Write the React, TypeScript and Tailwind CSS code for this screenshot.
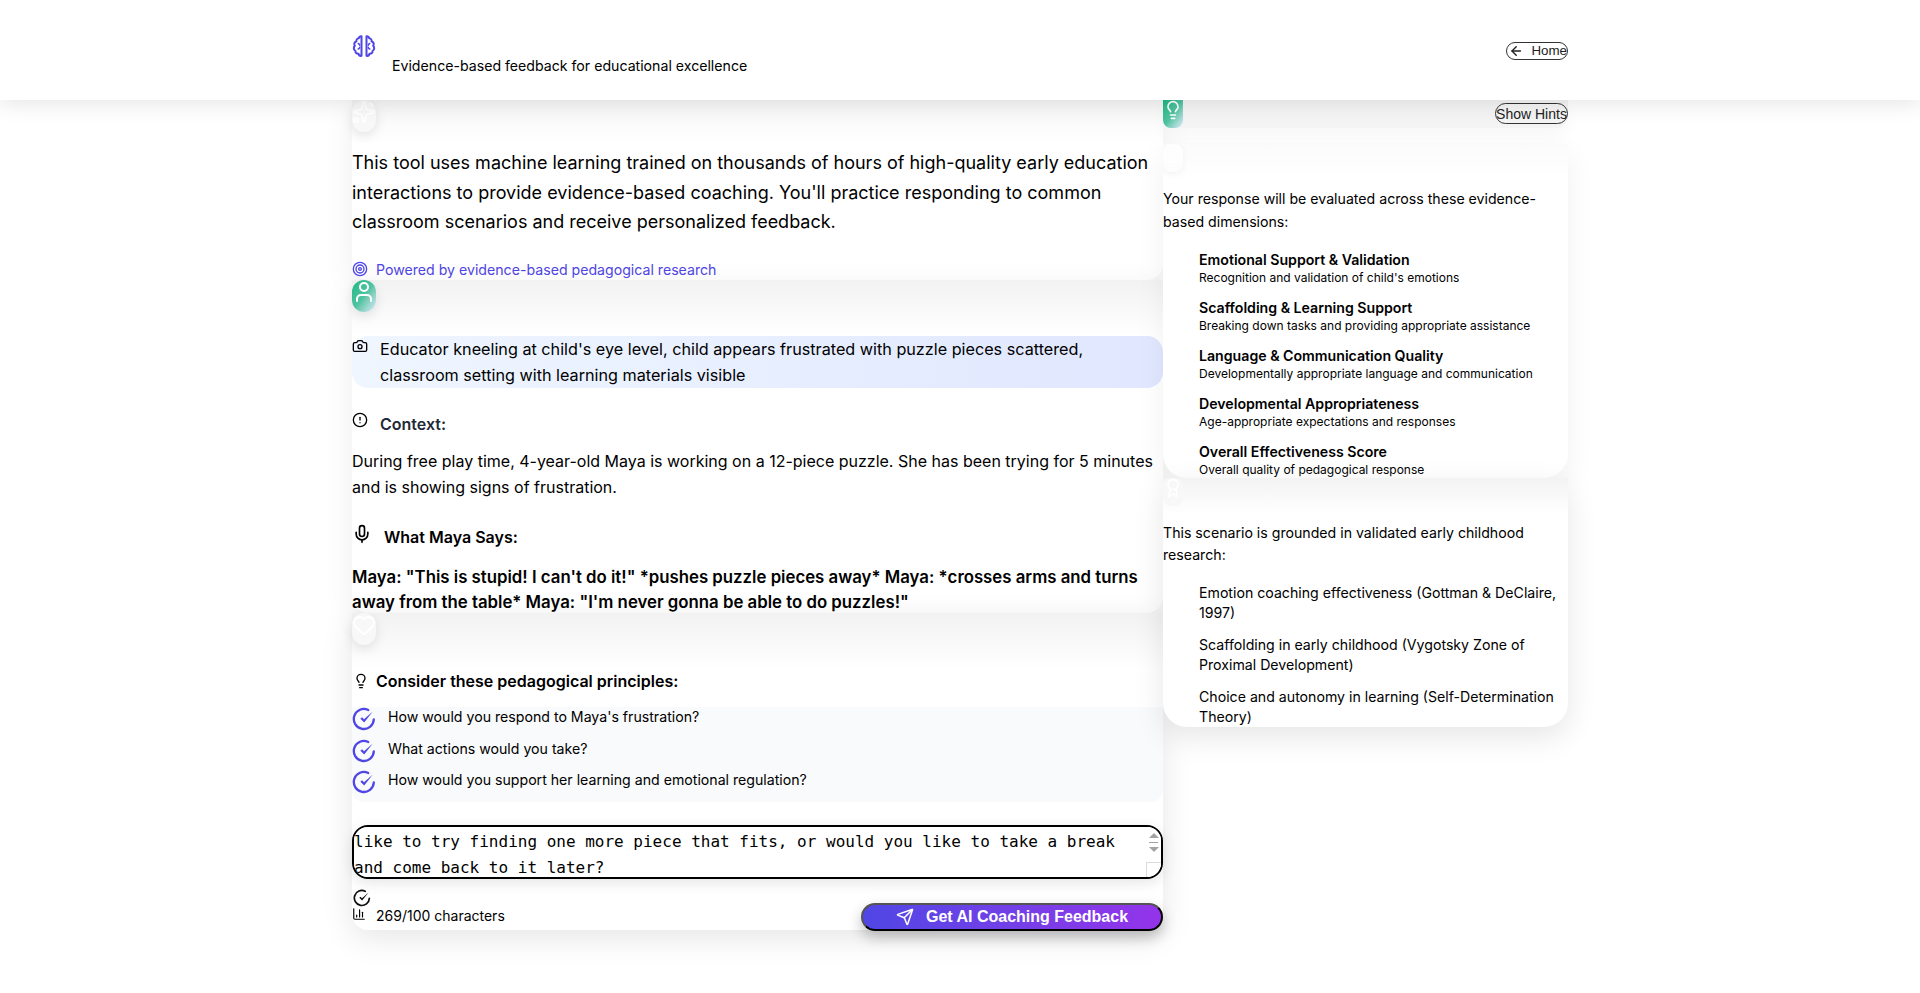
import { useEffect, useRef } from 'react';
import {
  ArrowLeft,
  Award,
  Camera,
  ChartColumn,
  CircleAlert,
  Heart,
  Lightbulb,
  Mic,
  Send,
  Sparkles,
  Target,
  User,
} from 'lucide-react';

const RESPONSE =
  "I can see that you're feeling really frustrated with this puzzle, Maya. Puzzles can be quite tricky and you have been working so hard on this one. Maybe you would like to try finding one more piece that fits, or would you like to take a break and come back to it later?";

const DIMENSIONS = [
  ['Emotional Support & Validation', "Recognition and validation of child's emotions"],
  ['Scaffolding & Learning Support', 'Breaking down tasks and providing appropriate assistance'],
  ['Language & Communication Quality', 'Developmentally appropriate language and communication'],
  ['Developmental Appropriateness', 'Age-appropriate expectations and responses'],
  ['Overall Effectiveness Score', 'Overall quality of pedagogical response'],
];

const RESEARCH = [
  'Emotion coaching effectiveness (Gottman & DeClaire, 1997)',
  'Scaffolding in early childhood (Vygotsky Zone of Proximal Development)',
  'Choice and autonomy in learning (Self-Determination Theory)',
];

const QUESTIONS = [
  "How would you respond to Maya's frustration?",
  'What actions would you take?',
  'How would you support her learning and emotional regulation?',
];

const Badge = ({ green, children }: { green?: boolean; children: React.ReactNode }) => (
  <div
    className={`w-6 h-8 rounded-xl overflow-hidden text-white shadow-[0_4px_12px_rgba(0,0,0,0.1)] ${
      green ? 'bg-gradient-to-br from-[#10b981] via-[#4fc3a1] to-[#dbeafe]' : 'bg-[#f8f8f8]'
    }`}
  >
    {children}
  </div>
);

// brain logo, two lobes around a centre bar
const BrainLogo = () => (
  <svg viewBox="0 0 24 24" fill="none" stroke="currentColor" strokeWidth={2} strokeLinecap="round" strokeLinejoin="round" className="w-6 h-6 text-[#4f46e5]">
    <path d="M9.5 2.2A2.6 2.6 0 0 0 6.8 4.2 2.6 2.6 0 0 0 4.4 7.4a2.7 2.7 0 0 0-1.5 4.4 3 3 0 0 0 .5 5 2.7 2.7 0 0 0 3.1 3 2.6 2.6 0 0 0 3 2z" />
    <path d="M14.5 2.2a2.6 2.6 0 0 1 2.7 2 2.6 2.6 0 0 1 2.4 3.2 2.7 2.7 0 0 1 1.5 4.4 3 3 0 0 1-.5 5 2.7 2.7 0 0 1-3.1 3 2.6 2.6 0 0 1-3 2z" />
    <path d="M6.2 9.5c.9.3 1.4.9 1.5 1.7M6.2 15c.9-.3 1.4-.9 1.5-1.7M17.8 9.5c-.9.3-1.4.9-1.5 1.7M17.8 15c-.9-.3-1.4-.9-1.5-1.7" strokeWidth={1.4} />
  </svg>
);

// open circle with a check that thins out to the right
const CheckRing = ({ className }: { className: string }) => (
  <svg viewBox="0 0 24 24" fill="none" className={className}>
    <path d="M21.8 12.5A10 10 0 1 1 16.2 3" stroke="currentColor" strokeWidth={2.3} strokeLinecap="round" />
    <path d="M8.4 11.8 10 10.3 12 12.2 20.8 4.6 12.2 15.4 z" fill="currentColor" />
  </svg>
);

// the picture's native scrollbar and resize corner
const FakeScrollbar = () => (
  <div className="absolute right-[2px] top-[2px] bottom-[2px] w-[15px] bg-white rounded-r-2xl overflow-hidden">
    <div className="mx-auto mt-[6px] w-0 h-0 border-x-[5px] border-x-transparent border-b-[5px] border-b-[#a3a3a3]" />
    <div className="mx-auto mt-[4px] w-[9px] h-px bg-[#a3a3a3]" />
    <div className="mx-auto mt-[4px] w-0 h-0 border-x-[5px] border-x-transparent border-t-[5px] border-t-[#a3a3a3]" />
    <div className="absolute left-0 bottom-0 w-[15px] h-[15px] border-l border-t border-[#dcdcdc]" />
  </div>
);

export default function App() {
  const areaRef = useRef<HTMLTextAreaElement>(null);

  useEffect(() => {
    const el = areaRef.current;
    if (el) el.scrollTop = el.scrollHeight - el.clientHeight - 4;
  }, []);

  return (
    <div className="min-h-[993px] bg-white font-['Inter',sans-serif] text-black">
      {/* Header */}
      <header className="relative z-10 h-[100px] bg-white shadow-[0_4px_20px_rgba(0,0,0,0.1)]">
        <div className="w-[1216px] mx-auto flex justify-between pt-[34px]">
          <div>
            <BrainLogo />
            <p className="ml-10 mt-[-2px] text-[14.15px] leading-5">
              Evidence-based feedback for educational excellence
            </p>
          </div>
          <button className="self-start mt-[8px] h-[18px] w-[62px] flex items-center gap-[8px] pl-[2px] border border-[#333] rounded-full font-['Liberation_Sans',sans-serif] text-[13.33px] text-[#222]">
            <ArrowLeft className="w-4 h-4" strokeWidth={2.4} />
            Home
          </button>
        </div>
      </header>

      <main className="w-[1216px] mx-auto flex items-start">
        {/* Left column */}
        <div className="w-[811px] flex flex-col">
          <section className="h-[180px] rounded-b-2xl bg-white shadow-[0_8px_32px_rgba(0,0,0,0.07)]">
            <div className="h-[44px] bg-gradient-to-b from-[#f6f6f6] to-white">
              <Badge>
                <Sparkles className="w-6 h-6" />
              </Badge>
            </div>
            <p className="mt-[4px] text-[18px] leading-[29.5px]">
              This tool uses machine learning trained on thousands of hours of high-quality early education
              interactions to provide evidence-based coaching. You'll practice responding to common
              classroom scenarios and receive personalized feedback.
            </p>
            <div className="mt-[22px] flex items-center gap-2 text-[14.15px] text-[#4f46e5]">
              <Target className="w-4 h-4" />
              Powered by evidence-based pedagogical research
            </div>
          </section>

          <section className="h-[333px] rounded-b-2xl bg-white shadow-[0_8px_32px_rgba(0,0,0,0.07)]">
            <div className="h-[56px] bg-gradient-to-b from-[#f2f2f2] to-white">
              <Badge green>
                <User className="w-6 h-6" />
              </Badge>
            </div>
            <div className="flex gap-3 h-[52px] rounded-2xl bg-gradient-to-r from-[#eff6ff] to-[#e0e7ff] text-[16.2px] leading-[26px]">
              <Camera className="w-4 h-4 mt-[2px] shrink-0" />
              <p>
                Educator kneeling at child's eye level, child appears frustrated with puzzle pieces scattered,
                classroom setting with learning materials visible
              </p>
            </div>
            <div className="mt-[24px] flex gap-3">
              <CircleAlert className="w-4 h-4 shrink-0" />
              <h3 className="text-base leading-6 font-semibold text-[#1f2937]">Context:</h3>
            </div>
            <p className="mt-[12px] text-base leading-[26px]">
              During free play time, 4-year-old Maya is working on a 12-piece puzzle. She has been trying for 5 minutes
              and is showing signs of frustration.
            </p>
            <div className="mt-[24px] flex gap-[13px]">
              <Mic className="w-5 h-5 shrink-0" />
              <h3 className="text-base leading-6 mt-[1px] ml-[-1px] font-semibold">What Maya Says:</h3>
            </div>
            <p className="mt-[16px] text-[16.8px] leading-[24.5px] font-semibold">
              Maya: "This is stupid! I can't do it!" *pushes puzzle pieces away* Maya: *crosses arms and turns
              away from the table* Maya: "I'm never gonna be able to do puzzles!"
            </p>
          </section>

          <section className="h-[317px] rounded-b-2xl bg-white shadow-[0_8px_32px_rgba(0,0,0,0.1)]">
            <div className="h-[56px] bg-gradient-to-b from-[#f2f2f2] to-white">
              <Badge>
                <Heart className="w-6 h-6" />
              </Badge>
            </div>
            <div className="flex items-center gap-[7px] pl-[1px]">
              <Lightbulb className="w-4 h-4 shrink-0" />
              <h3 className="text-base leading-6 font-semibold">Consider these pedagogical principles:</h3>
            </div>
            <ul className="mt-[14px] h-[95px] rounded-b-xl bg-[#f9fafb] text-[14.15px]">
              {QUESTIONS.map((q) => (
                <li key={q} className="h-[31.5px] flex gap-3">
                  <CheckRing className="w-6 h-6 shrink-0 text-[#4f46e5]" />
                  <span className="leading-5">{q}</span>
                </li>
              ))}
            </ul>
            <div className="relative mt-[23px]">
              <textarea
                ref={areaRef}
                readOnly
                defaultValue={RESPONSE}
                className="block w-full h-[54px] pr-[15px] border-2 border-black rounded-2xl bg-white font-['DejaVu_Sans_Mono',monospace] text-base leading-[26px] text-black shadow-[0_4px_14px_rgba(0,0,0,0.1)] outline-none resize-none"
              />
              <FakeScrollbar />
            </div>
            <div className="mt-[10px] flex justify-between">
              <div>
                <CheckRing className="w-[18px] h-[18px] ml-[1px] text-[#111]" />
                <div className="flex items-start gap-[10px] text-sm leading-5 mt-[-1px]">
                  <ChartColumn className="w-[14px] h-[14px] mt-[1px]" />
                  269/100 characters
                </div>
              </div>
              <button className="self-end mb-[-5px] h-[28px] w-[302px] flex items-center justify-center gap-[12px] rounded-full border-2 border-black [border-style:outset] bg-gradient-to-r from-[#4f46e5] to-[#9333ea] font-['Liberation_Sans',sans-serif] text-base font-bold text-white shadow-[0_6px_14px_rgba(0,0,0,0.25)]">
                <Send className="w-[18px] h-[18px]" />
                Get AI Coaching Feedback
              </button>
            </div>
          </section>
        </div>

        {/* Right column */}
        <div className="w-[405px] flex flex-col">
          <section className="h-[28px] flex justify-between rounded-b-xl bg-[#f4f4f4] shadow-[0_8px_16px_rgba(0,0,0,0.03)]">
            <div className="w-5 h-[28px] rounded-b-lg overflow-hidden text-white bg-gradient-to-br from-[#10b981] via-[#4fc3a1] to-[#dbeafe]">
              <Lightbulb className="w-5 h-5" />
            </div>
            <button className="mt-[3px] h-[21px] w-[73px] border border-[#333] rounded-full font-['Liberation_Sans',sans-serif] text-sm leading-none text-[#222]">
              Show Hints
            </button>
          </section>

          <section className="mt-4 h-[334px] overflow-hidden rounded-b-3xl bg-white shadow-[0_10px_30px_rgba(0,0,0,0.06)]">
            <div className="h-[36px] bg-gradient-to-b from-[#fbfbfb] to-white">
              <div className="w-5 h-[28px] rounded-lg overflow-hidden text-white bg-[#fdfdfd] shadow-[0_2px_6px_rgba(0,0,0,0.05)]">
                <Target className="w-5 h-5" />
              </div>
            </div>
            <p className="mt-[7px] text-[14.15px] leading-[23px]">
              Your response will be evaluated across these evidence-based dimensions:
            </p>
            <ul className="mt-[17px]">
              {DIMENSIONS.map(([title, desc]) => (
                <li key={title} className="mb-[12px] pl-9">
                  <div className="text-[14.15px] leading-[19px] font-semibold">{title}</div>
                  <div className="text-xs leading-[17px]">{desc}</div>
                </li>
              ))}
            </ul>
          </section>

          <section className="h-[249px] overflow-hidden rounded-b-3xl bg-white shadow-[0_10px_30px_rgba(0,0,0,0.1)]">
            <div className="h-[36px] bg-gradient-to-b from-[#f3f3f3] to-white">
              <div className="w-5 h-[28px] rounded-lg overflow-hidden text-white bg-[#f8f8f8]">
                <Award className="w-5 h-5" />
              </div>
            </div>
            <p className="mt-[8px] text-[14.15px] leading-[22px]">
              This scenario is grounded in validated early childhood research:
            </p>
            <ul className="mt-[17px]">
              {RESEARCH.map((r) => (
                <li key={r} className="mb-[12px] pl-9 text-[14.15px] leading-5">
                  {r}
                </li>
              ))}
            </ul>
          </section>
        </div>
      </main>
    </div>
  );
}
